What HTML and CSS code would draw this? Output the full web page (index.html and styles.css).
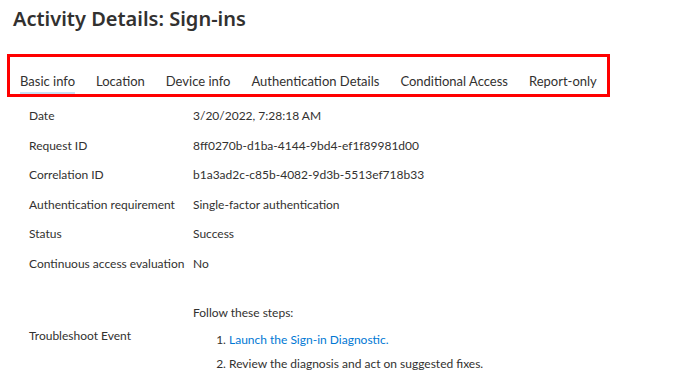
FILE: index.html
```html
<!DOCTYPE html>
<html lang="en">
<head>
    <meta charset="UTF-8">
    <meta name="viewport" content="width=device-width, initial-scale=1.0">
    <title>Activity Details: Sign-ins</title>
    <link rel="stylesheet" href="styles.css">
</head>
<body>
    <h1 class="title">Activity Details: Sign-ins</h1>

    <div class="tabs-box">
        <div class="tabs">
            <span class="tab active">Basic info</span>
            <span class="tab">Location</span>
            <span class="tab">Device info</span>
            <span class="tab">Authentication Details</span>
            <span class="tab">Conditional Access</span>
            <span class="tab">Report-only</span>
        </div>
    </div>

    <div class="details">
        <div class="label">Date</div>
        <div class="value">3/20/2022, 7:28:18 AM</div>
        <div class="label">Request ID</div>
        <div class="value">8ff0270b-d1ba-4144-9bd4-ef1f89981d00</div>
        <div class="label">Correlation ID</div>
        <div class="value">b1a3ad2c-c85b-4082-9d3b-5513ef718b33</div>
        <div class="label">Authentication requirement</div>
        <div class="value">Single-factor authentication</div>
        <div class="label">Status</div>
        <div class="value">Success</div>
        <div class="label">Continuous access evaluation</div>
        <div class="value">No</div>
    </div>

    <div class="troubleshoot">
        <div class="label">Troubleshoot Event</div>
        <div class="steps">
            <p class="steps-intro">Follow these steps:</p>
            <ol>
                <li><a href="#">Launch the Sign-in Diagnostic.</a></li>
                <li>Review the diagnosis and act on suggested fixes.</li>
            </ol>
        </div>
    </div>
</body>
</html>
```

FILE: styles.css
```css
body {
    font-family: "Segoe UI", Lato, sans-serif;
    margin: 0;
    padding: 0;
    background-color: white;
    color: #323130;
    font-size: 12px;
}
.title {
    font-family: "Segoe UI", "Noto Sans", sans-serif;
    font-size: 20px;
    font-weight: 600;
    margin: 0;
    padding: 3px 0 0 13px;
    line-height: 32px;
}
.tabs-box {
    margin: 19px 0 0 7px;
    width: 597px;
    height: 37px;
    border: 3px solid #ff0000;
}
.tabs {
    display: flex;
    padding: 0 0 0 10px;
    margin-top: 13px;
    white-space: nowrap;
}
.tab {
    font-size: 13px;
    line-height: 22px;
    margin-right: 21px;
    border-bottom: 1px solid transparent;
}
.tab.active {
    border-bottom: 2px solid #c7e0f4;
}
.details {
    display: grid;
    grid-template-columns: 164px auto;
    grid-auto-rows: 29.5px;
    padding: 4px 0 0 29px;
    align-items: center;
    white-space: nowrap;
}
.troubleshoot {
    display: flex;
    align-items: flex-start;
    padding: 27px 0 0 29px;
}
.troubleshoot .label {
    width: 164px;
    line-height: 16px;
    margin-top: 23px;
}
.steps-intro {
    margin: 0 0 11px;
    line-height: 16px;
}
.steps ol {
    margin: 0;
    padding-left: 36px;
}
.steps li {
    line-height: 16px;
    margin-bottom: 8px;
}
.steps a {
    color: #0078d4;
    text-decoration: none;
}
```
